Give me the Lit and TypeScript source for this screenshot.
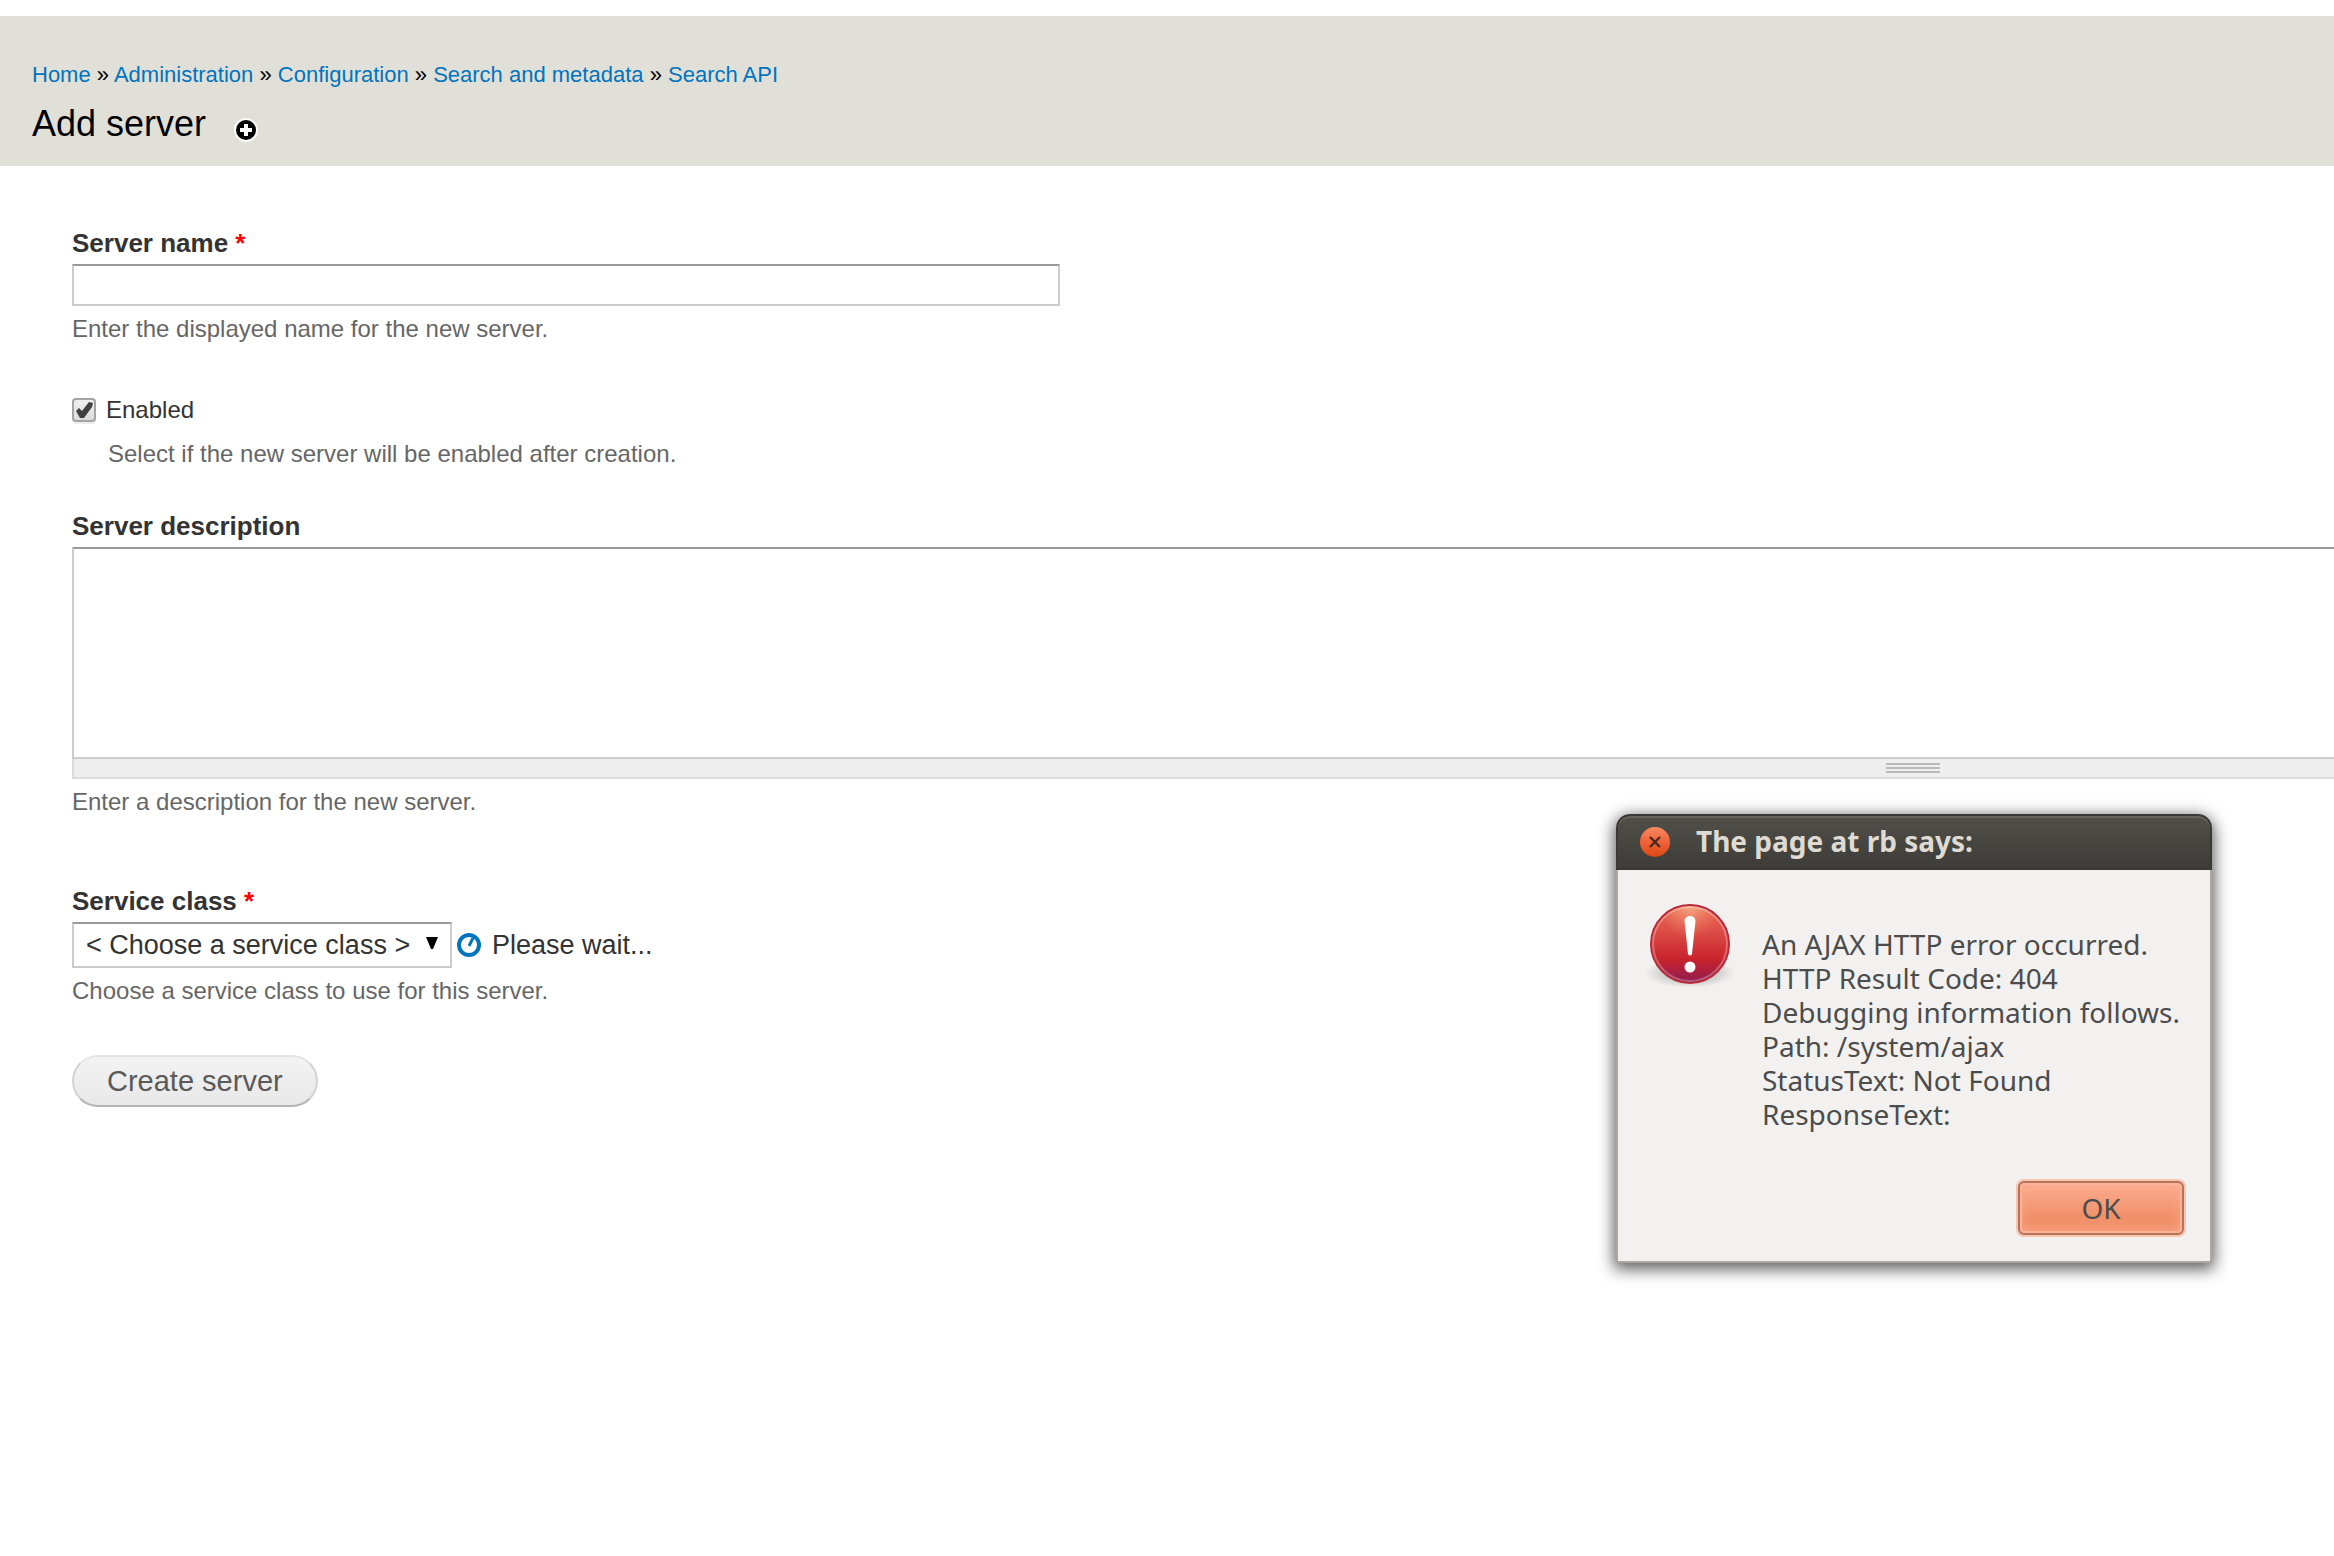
import { LitElement, html, css } from "lit";
import { customElement, state } from "lit/decorators.js";

const CRUMBS = ["Home", "Administration", "Configuration", "Search and metadata", "Search API"];

const MESSAGE = [
  "An AJAX HTTP error occurred.",
  "HTTP Result Code: 404",
  "Debugging information follows.",
  "Path: /system/ajax",
  "StatusText: Not Found",
  "ResponseText:",
];

@customElement("alert-dialog")
export class AlertDialog extends LitElement {
  static styles = css`
    :host {
      display: block;
      font-family: "Noto Sans", "Open Sans", sans-serif;
      color: #4c4c4c;
    }
    .window {
      border-radius: 14px 14px 0 0;
      box-shadow: 0 4px 16px 2px rgba(0, 0, 0, 0.65);
    }
    .bar {
      display: flex;
      align-items: center;
      gap: 26px;
      box-sizing: border-box;
      height: 56px;
      padding: 0 22px;
      border: 2px solid #3a3935;
      border-radius: 14px 14px 0 0;
      background: linear-gradient(#504f49, #3d3c38);
      box-shadow: inset 0 2px 0 #66655c;
    }
    .close {
      width: 30px;
      height: 30px;
      padding: 0;
      border: 0;
      border-radius: 50%;
      background: none;
    }
    svg {
      display: block;
    }
    .title {
      margin: 0;
      padding-bottom: 2px;
      font-size: 28px;
      line-height: 34px;
      font-weight: 700;
      color: #dfdbd2;
      white-space: nowrap;
    }
    .body {
      padding: 32px 26px 26px 27px;
      border: 2px solid #aaa7a2;
      border-top: 0;
      background: #f2f1f0;
    }
    .content {
      display: flex;
      gap: 27px;
    }
    .message {
      margin: 0;
      padding-top: 25px;
      font-size: 28px;
      line-height: 34px;
      white-space: nowrap;
    }
    .actions {
      display: flex;
      justify-content: flex-end;
      padding-top: 50px;
    }
    .ok {
      width: 166px;
      height: 54px;
      padding: 0;
      border: 2px solid #b5725a;
      border-radius: 6px;
      background: linear-gradient(#fcad90, #f08f69 70%, #f2946f);
      box-shadow: 0 0 0 2px #f9c4b0, inset 0 0 0 2px #fbb297, inset 0 0 12px #fbab8c;
      font: inherit;
      font-size: 28px;
      line-height: 34px;
      color: #4c4c4c;
    }
  `;

  render() {
    return html`
      <section class="window" role="alertdialog" aria-labelledby="title" aria-describedby="message">
        <header class="bar">
          <button class="close" aria-label="Close">
            <svg width="30" height="30" viewBox="0 0 30 30">
              <defs>
                <linearGradient id="c" x1="0" y1="0" x2="0" y2="1">
                  <stop offset="0" stop-color="#f98a63" />
                  <stop offset="0.5" stop-color="#ee6238" />
                  <stop offset="1" stop-color="#dd4814" />
                </linearGradient>
              </defs>
              <circle cx="15" cy="15" r="15" fill="url(#c)" />
              <path d="M10 10l10 10M20 10l-10 10" stroke="#4a2a20" stroke-width="2.4" />
            </svg>
          </button>
          <h2 class="title" id="title">The page at rb says:</h2>
        </header>
        <div class="body">
          <div class="content">
            <svg width="90" height="90" viewBox="0 0 90 90" aria-hidden="true">
              <defs>
                <linearGradient id="b" x1="0" y1="0" x2="0" y2="1">
                  <stop offset="0" stop-color="#e96a54" />
                  <stop offset="0.3" stop-color="#de5049" />
                  <stop offset="0.7" stop-color="#c8232c" />
                  <stop offset="1" stop-color="#8f1b52" />
                </linearGradient>
                <radialGradient id="g" cx="0.5" cy="0.02" r="0.4">
                  <stop offset="0" stop-color="#f7b088" stop-opacity="0.9" />
                  <stop offset="1" stop-color="#f08060" stop-opacity="0" />
                </radialGradient>
                <radialGradient id="s">
                  <stop offset="0" stop-color="#000" stop-opacity="0.35" />
                  <stop offset="1" stop-color="#000" stop-opacity="0" />
                </radialGradient>
              </defs>
              <ellipse cx="45" cy="71" rx="45" ry="15" fill="url(#s)" />
              <circle cx="45" cy="42" r="39" fill="url(#b)" />
              <circle cx="45" cy="42" r="39" fill="url(#g)" stroke="#b82a38" stroke-width="2" />
              <circle cx="45" cy="42" r="37" fill="none" stroke="#fff" stroke-opacity="0.28" stroke-width="2" />
              <path d="M39.500 19a5.500 5 0 0 1 11 0l-3.500 33q-2 3-4 0z" fill="#fff" />
              <circle cx="45" cy="65" r="5.5" fill="#fff" />
            </svg>
            <p class="message" id="message">${MESSAGE.map((line, i) => html`${i ? html`<br />` : ""}${line}`)}</p>
          </div>
          <div class="actions"><button class="ok">OK</button></div>
        </div>
      </section>
    `;
  }
}

@customElement("app-root")
export class AppRoot extends LitElement {
  static styles = css`
    :host {
      display: block;
      position: relative;
      min-height: 100vh;
      overflow: hidden;
      background: #fff;
      font-family: "Liberation Sans", Arial, sans-serif;
      font-size: 26px;
      line-height: 34px;
      color: #333;
    }
    .branding {
      margin-top: 16px;
      padding: 40px 32px 20px;
      background: #e0e0d8;
    }
    .crumbs {
      font-size: 22px;
      line-height: 38px;
      color: #000;
    }
    .crumbs a {
      color: #0074bd;
      text-decoration: none;
    }
    .heading {
      display: flex;
      align-items: center;
      gap: 28px;
      padding-top: 8px;
    }
    h1 {
      margin: 0;
      font-size: 36px;
      line-height: 44px;
      font-weight: 400;
      color: #000;
    }
    .shortcut {
      display: block;
      padding-top: 12px;
    }
    svg {
      display: block;
    }
    form {
      display: flex;
      flex-direction: column;
      align-items: flex-start;
      padding: 60px 0 0 72px;
    }
    .item {
      width: 100%;
      padding-bottom: 47px;
    }
    .item.compact {
      padding-bottom: 38px;
    }
    .item.spacious {
      padding-bottom: 65px;
    }
    .label {
      display: block;
      padding-bottom: 4px;
      font-weight: 700;
    }
    .required {
      color: #f00;
    }
    .hint {
      padding-top: 6px;
      font-size: 24px;
      line-height: 34px;
      color: #666;
    }
    .text,
    .area,
    .select {
      display: block;
      box-sizing: border-box;
      margin: 0;
      border: 2px solid #ccc;
      border-top-color: #999;
      border-radius: 0;
      background: #fff;
      font: inherit;
      color: #333;
      appearance: none;
      outline: 0;
    }
    .text {
      width: 988px;
      max-width: 100%;
      height: 42px;
      padding: 4px;
    }
    .option {
      display: flex;
      align-items: center;
      gap: 10px;
      font-size: 24px;
    }
    .check {
      position: relative;
      display: block;
      width: 24px;
      height: 24px;
    }
    .check input {
      display: block;
      box-sizing: border-box;
      width: 24px;
      height: 24px;
      margin: 0;
      appearance: none;
      border: 2px solid #a4a4a4;
      border-radius: 4px;
      background: linear-gradient(#efefef, #dcdcdc);
      box-shadow: 0 2px 0 #ececec;
    }
    .check svg {
      position: absolute;
      inset: 0;
      pointer-events: none;
    }
    .check input:not(:checked) + svg {
      display: none;
    }
    .hint.indent {
      padding: 10px 0 0 36px;
    }
    /* The text area runs on past the right edge of the window. */
    .wide {
      width: calc(100% + 1420px);
    }
    .area {
      width: 100%;
      height: 212px;
      padding: 4px;
      resize: none;
    }
    .grip {
      display: flex;
      justify-content: center;
      box-sizing: border-box;
      height: 20px;
      padding-top: 4px;
      border: 2px solid #ddd;
      border-top: 0;
      background: #eee;
    }
    .row {
      display: flex;
      align-items: center;
      gap: 4px;
      font-size: 27px;
    }
    .picker {
      position: relative;
    }
    .picker svg {
      position: absolute;
      right: 14px;
      top: 15px;
      pointer-events: none;
    }
    .select {
      width: 380px;
      height: 46px;
      padding: 0 12px;
    }
    .progress {
      display: flex;
      align-items: center;
      gap: 10px;
    }
    .create {
      height: 52px;
      padding: 0 33px;
      border: 2px solid #e4e4e4;
      border-bottom-color: #b4b4b4;
      border-left-color: #d2d2d2;
      border-right-color: #d2d2d2;
      border-radius: 26px;
      background: linear-gradient(#f3f3f3, #e8e8e8);
      font: inherit;
      font-size: 29px;
      color: #5a5a5a;
    }
    .alert {
      position: absolute;
      left: 1616px;
      top: 814px;
      width: 596px;
    }
  `;

  @state() private enabled = true;

  render() {
    return html`
      <header class="branding">
        <nav class="crumbs" aria-label="Breadcrumb">
          ${CRUMBS.map((name, i) => html`${i ? " » " : ""}<a href="#">${name}</a>`)}
        </nav>
        <div class="heading">
          <h1>Add server</h1>
          <a class="shortcut" href="#" aria-label="Add to shortcuts">
            <svg width="24" height="24" viewBox="0 0 24 24">
              <circle cx="12" cy="12" r="12" fill="#fff" fill-opacity="0.85" />
              <circle cx="12" cy="12" r="10" fill="#000" />
              <path d="M10 6h4v4h4v4h-4v4h-4v-4h-4v-4h4z" fill="#fff" />
            </svg>
          </a>
        </div>
      </header>
      <form @submit=${(e: Event) => e.preventDefault()}>
        <div class="item">
          <label class="label" for="name">Server name <span class="required">*</span></label>
          <input class="text" id="name" type="text" />
          <div class="hint">Enter the displayed name for the new server.</div>
        </div>
        <div class="item compact">
          <div class="option">
            <span class="check">
              <input
                id="enabled"
                type="checkbox"
                .checked=${this.enabled}
                @change=${(e: Event) => (this.enabled = (e.target as HTMLInputElement).checked)}
              />
              <svg width="24" height="24" viewBox="0 0 24 24">
                <path d="M4 13l3-3 3 3 7-9 4 1-1 4-8 11h-4z" fill="#404040" />
              </svg>
            </span>
            <label for="enabled">Enabled</label>
          </div>
          <div class="hint indent">Select if the new server will be enabled after creation.</div>
        </div>
        <div class="item spacious">
          <label class="label" for="description">Server description</label>
          <div class="wide">
            <textarea class="area" id="description"></textarea>
            <div class="grip">
              <svg width="54" height="10" viewBox="0 0 54 10">
                <path d="M0 1h54M0 5h54M0 9h54" stroke="#bbb" stroke-width="2" />
              </svg>
            </div>
          </div>
          <div class="hint">Enter a description for the new server.</div>
        </div>
        <div class="item">
          <label class="label" for="service">Service class <span class="required">*</span></label>
          <div class="row">
            <div class="picker">
              <select class="select" id="service">
                <option>&lt; Choose a service class &gt;</option>
              </select>
              <svg width="12" height="12" viewBox="0 0 12 12"><path d="M0 0h12l-5 12h-2z" fill="#000" /></svg>
            </div>
            <div class="progress" role="status">
              <svg width="26" height="26" viewBox="0 0 26 26">
                <circle cx="13" cy="13" r="10" fill="#fff" stroke="#0074bd" stroke-width="4" />
                <path d="M13 14l4-8" stroke="#0074bd" stroke-width="3" />
              </svg>
              <span>Please wait...</span>
            </div>
          </div>
          <div class="hint">Choose a service class to use for this server.</div>
        </div>
        <button class="create" type="submit">Create server</button>
      </form>
      <alert-dialog class="alert"></alert-dialog>
    `;
  }
}
